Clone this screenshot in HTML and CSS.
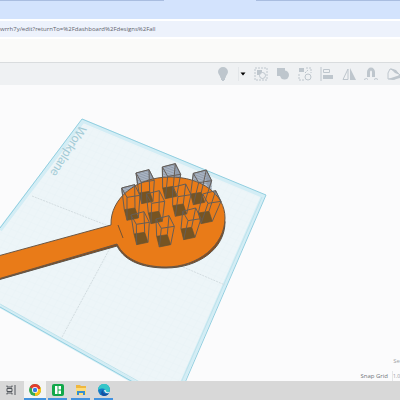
FILE: index.html
```
<!DOCTYPE html>
<html lang="en">
<head>
<meta charset="utf-8">
<meta name="viewport" content="width=device-width, initial-scale=1">
<title>Workplane</title>
<link rel="stylesheet" href="styles.css">
</head>
<body>
<div class="tabs"><span class="tab-line tab-line-left"></span><span class="tab-gap"></span><span class="tab-line"></span></div>
<div class="address">wrrh7y/edit?returnTo=%2Fdashboard%2Fdesigns%2Fall</div>
<header class="header"></header>
<nav class="toolbar">
  <button class="tool" aria-label="Show"><svg viewBox="0 0 14 14"><path class="solid" d="M7 0a5 5 0 0 0-5 5c0 2 2 3 2.500 6h5C10 8 12 7 12 5a5 5 0 0 0-5-5zM5 11h4v2H8v1H6v-1H5z"/></svg></button>
  <button class="tool caret" aria-label="More"><svg viewBox="0 0 6 4"><path d="M0.500 0.500h5L3 3.500z"/></svg></button>
  <button class="tool" aria-label="Group"><svg viewBox="0 0 14 14"><path class="line dash" d="M1 1h12v12H1z"/><path class="solid" d="M3 3h5v2L5 8H3z"/><circle class="line" cx="8.500" cy="8.500" r="3"/></svg></button>
  <button class="tool" aria-label="Combine"><svg viewBox="0 0 14 14"><path class="solid" d="M1 1h8v3H1zM1 1h7v8H1z"/><circle class="solid" cx="8.500" cy="8" r="4.500"/></svg></button>
  <button class="tool" aria-label="Ungroup"><svg viewBox="0 0 14 14"><path class="solid" d="M1 1h5v4H1z"/><circle class="line" cx="10" cy="10" r="3"/><path class="line dash" d="M8 1h5v5M1 7v6h5M7 6l3-3"/></svg></button>
  <button class="tool" aria-label="Align"><svg viewBox="0 0 14 14"><path class="line" d="M1 0v14M3.500 2.500h6v3h-6z"/><path class="solid" d="M3 8h10v4H3z"/></svg></button>
  <button class="tool" aria-label="Mirror"><svg viewBox="0 0 14 14"><path class="line" d="M6 2v10.500H1z"/><path class="solid" d="M8 1v12h6z"/></svg></button>
  <button class="tool" aria-label="Cruise"><svg viewBox="0 0 14 14"><path class="magnet" d="M4.500 10V5a2.500 3 0 0 1 5 0V10"/><path class="line" d="M0 12.500q3-2 4 0M10 12.500q2-2 4 0"/></svg></button>
  <button class="tool" aria-label="Drop"><svg viewBox="0 0 14 14"><path class="line" d="M2 12V6l2-4 6 2 4 4-5 4z"/><path class="solid" d="M4 1l6 2 4 5-5-2zM2 12l12-4v3l-7 2z"/></svg></button>
</nav>
<main class="stage">
  <svg class="scene" viewBox="0 85 400 296" preserveAspectRatio="xMinYMin slice" role="img" aria-label="Design">
    <defs><pattern id="grid" width="7" height="7" patternUnits="userSpaceOnUse" patternTransform="matrix(.92 .38 -.5 .86 0 0)"><path class="grid-line" d="M0 0h7M0 0v7"/></pattern></defs>
    <path class="plane" d="M82 119L266 195 182 388 145 386 0 304V228z"/>
    <path fill="url(#grid)" d="M82 119L266 195 182 388 145 386 0 304V228z"/>
    <path class="rim" d="M0 230L83 121 263 196 181 385M0 306L145 388"/>
    <path class="edge" d="M0 228L82 119 266 195 184 385M0 307L140 386"/>
    <path class="edge faint" d="M0 304L145 385M262 197L180 385"/>
    <path class="axis" d="M32 196L111 227M183 267L225 285M110 248L61 339"/>
    <text class="plane-label" transform="translate(80 125) rotate(122)">Workplane</text>
    <g id="shafts" transform="translate(100 160) scale(.3333)"></g>
    <path class="side" d="M-2 280L117 246C125 262 144 268 166 268 198 268 225 249 225 222L220 210 110 236-2 263z"/>
    <path class="orange" d="M-2 256L111 225C110 198 137 177 170 177 201 177 225 194 225 218 225 245 198 267 166 267 144 267 125 260 117 244L-2 279z"/>
    <path class="mark" d="M118 225l5 13"/>
    <g id="frames" transform="translate(100 160) scale(.3333)"></g>
  </svg>
  <div class="grid-panel">
    <button class="settings">Se</button>
    <div class="snap"><span>Snap Grid</span><button class="snap-value" aria-label="Snap Grid">1.0</button></div>
  </div>
</main>
<footer class="taskbar">
  <button class="task" aria-label="Task view"><svg viewBox="0 0 12 12"><path class="view" d="M2 1.500v1.500h5V1.500M2 10.500V9h5v1.500M2 4.500h5v3H2zM10 1v10"/></svg></button>
  <button class="task open current" aria-label="Chrome"><svg viewBox="0 0 12 12"><circle cx="6" cy="6" r="6" fill="#34a853"/><path d="M6 6L.8 3A6 6 0 0 1 11.200 3z" fill="#e53b2d"/><path d="M6 6l5.200-3A6 6 0 0 1 6 12z" fill="#fbc116"/><path d="M1 3h10v2H4z" fill="#e53b2d"/><circle cx="6" cy="6" r="3" fill="#fff"/><circle cx="6" cy="6" r="2.200" fill="#3979e8"/></svg></button>
  <button class="task open" aria-label="Board"><svg viewBox="0 0 12 12"><rect width="12" height="12" rx="2" fill="#12a84a"/><path d="M3 2h2.500v8H3zM6.500 2H9v3.500H6.500zM6.500 6.500H9V10H6.500z" fill="#fff"/></svg></button>
  <button class="task open" aria-label="Files"><svg viewBox="0 0 12 12"><path d="M1 1h4l1 1h5v9H1z" fill="#efb73e"/><path d="M1 4h10v7H1z" fill="#ffdc78"/><path d="M2 11V7h8v4H8V9H4v2z" fill="#368fd0"/></svg></button>
  <button class="task open" aria-label="Edge"><svg viewBox="0 0 12 12"><circle cx="6" cy="6" r="6" fill="#127bc5"/><path d="M0 6a6 6 0 0 1 12-.5C12 8 9 9 7 8c2-3-2-5-7-2z" fill="#35c6c8"/><path d="M5 6c-1 3 2 5 6 3-1 2-3 3-5 3-3 0-4-4-1-6z" fill="#174fa0"/><path d="M6 6q2-1 2 1.500 2 1.500 4 0L11 9Q7 10 6 6z" fill="#e2f1f5"/></svg></button>
</footer>
<script src="scene.js"></script>
</body>
</html>
```
FILE: styles.css
```
* { box-sizing: border-box; }
body {
  margin: 0;
  height: 100vh;
  display: flex;
  flex-direction: column;
  overflow: hidden;
  background: #fbfbfc;
  font-family: "Open Sans", "Noto Sans", sans-serif;
}
button { border: 0; padding: 0; background: none; font: inherit; color: inherit; }
svg { display: block; }

.tabs { flex: none; display: flex; height: 19px; background: #d3e3fd; }
.tab-line { flex: 36; height: 1px; background: #a9bde0; }
.tab-line-left { flex: 41; }
.tab-gap { flex: 23; }
.address {
  flex: none;
  height: 20px;
  border: solid #fff;
  border-width: 2px 0;
  background: #edf2fc;
  color: #5f636c;
  font-size: 6px;
  line-height: 17px;
  white-space: nowrap;
}
.header { flex: none; height: 24px; background: #fafaf9; border-bottom: 1px solid #d9dcde; }
.toolbar {
  flex: none;
  display: flex;
  align-items: center;
  justify-content: flex-end;
  gap: 8px;
  height: 22px;
  padding-bottom: 1px;
  background: #eff1f3;
  overflow: hidden;
}
.tool { flex: none; width: 14px; height: 14px; }
.caret { display: flex; justify-content: center; align-items: center; width: 8px; border-left: 1px solid #e3e6e9; }
.caret svg { flex: none; width: 6px; height: 4px; }
.solid { fill: #bec6cd; }
.line { fill: none; stroke: #bec6cd; }
.dash { stroke-dasharray: 2 1; }
.magnet { fill: none; stroke: #bec6cd; stroke-width: 3; }

.stage { flex: 1; min-height: 0; position: relative; overflow: hidden; }
.scene { width: 100%; height: 100%; }
.plane { fill: #edf5f8; }
.grid-line { fill: none; stroke: #e5f0f4; stroke-width: .5; }
.rim { fill: none; stroke: #d3edf5; stroke-width: 4; }
.edge { fill: none; stroke: #92cfe0; }
.faint { stroke: #bfe3ec; }
.axis { fill: none; stroke: #d3dde1; stroke-dasharray: 2 1; }
.plane-label { fill: #a3cbd6; font: 12px "Liberation Sans", sans-serif; }
.side { fill: #8c4b18; stroke: #59544b; }
.orange { fill: #e97b18; stroke: #6b5745; }
.mark { stroke: #755332; }
.shaft { fill: #b5bfcd; stroke: #506073; stroke-width: 2; }
.hatch { fill: none; stroke: #7f8b9c; stroke-width: 2; }
.base { fill: #775422; stroke: #61533a; stroke-width: 2; }
.frame { fill: none; stroke: #655d56; stroke-width: 3; }

.grid-panel { position: absolute; right: 0; bottom: 0; color: #71757a; font-size: 6px; line-height: 10px; }
.settings { display: block; margin-left: auto; height: 10px; margin-bottom: 5px; color: #a0a3a6; }
.snap { display: flex; gap: 4px; }
.snap-value { height: 10px; border-left: 1px solid #e4e6e8; color: #94979b; font-size: 5px; text-align: left; }

.taskbar { flex: none; display: flex; gap: 4px; height: 19px; background: #d8d8d8; }
.task { display: flex; justify-content: center; align-items: center; width: 19px; border-bottom: 2px solid transparent; }
.task:first-child { width: 22px; margin-right: -2px; }
.task svg { flex: none; width: 12px; height: 12px; }
.open { border-bottom-color: #4292df; }
.current { width: 22px; margin-right: -2px; background: #f4f4f4; }
.view { fill: none; stroke: #50545a; }
```
FILE: scene.js
```
// Each prism: base centre x, y, then top centre x, y.
const prisms = [
  [137, 112, 135, 47], [208, 97, 214, 29], [292, 115, 307, 48],
  [93, 162, 92, 92], [165, 172, 166, 110], [238, 150, 245, 90],
  [315, 172, 335, 110], [122, 235, 120, 173], [190, 242, 195, 185],
  [263, 220, 275, 162]
];
const baseShape = [[-20, -13], [12, -18], [22, 12], [-12, 19]];
const topShape = [[-27, -8], [12, -18], [28, 14], [-11, 20]];
const place = (shape, x, y) => shape.map(p => [x + p[0], y + p[1]]);
let shafts = "";
let frames = "";
for (const [bx, by, tx, ty] of prisms) {
  const b = place(baseShape, bx, by);
  const t = place(topShape, tx, ty);
  shafts += `<polygon class="shaft" points="${t[0]} ${t[1]} ${t[2]} ${b[2]} ${b[3]} ${b[0]}"/>`;
  for (let k = 4; k < 42; k += 5) {
    shafts += `<path class="hatch" d="M${t[0][0] + 1} ${t[0][1] + k}L${t[1][0]} ${t[1][1] + k}L${t[2][0]} ${t[2][1] + k}"/>`;
  }
  frames += `<polygon class="base" points="${b.join(" ")}"/>`;
  frames += `<path class="frame" d="M${t[0]}L${t[1]}L${t[2]}L${b[2]}M${t[0]}L${b[0]}M${t[1]}L${b[1]}M${t[3]}L${b[3]}M${t[0]}L${t[3]}L${t[2]}"/>`;
}
document.getElementById("shafts").innerHTML = shafts;
document.getElementById("frames").innerHTML = frames;
```
